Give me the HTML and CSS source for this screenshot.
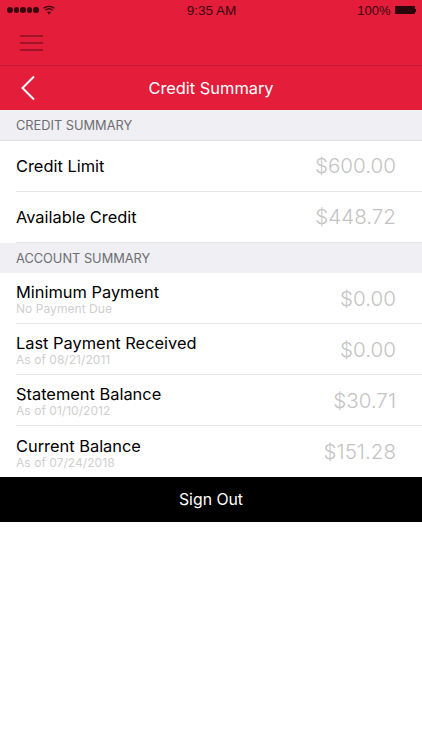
FILE: index.html
```html
<!DOCTYPE html>
<html lang="en">
<head>
    <meta charset="UTF-8">
    <meta name="viewport" content="width=device-width, initial-scale=1.0">
    <title>Credit Summary</title>
    <link rel="stylesheet" href="styles.css">
</head>
<body>
    <div class="header">
        <div class="status-bar">
            <div class="status-left">
                <span class="signal"><i></i><i></i><i></i><i></i><i></i></span>
                <svg class="wifi" width="12" height="10" viewBox="0 0 12 10">
                    <path d="M.6 3.3C3.6 .6 8.4 .6 11.4 3.3" fill="none" stroke="#3a0810" stroke-width="1.3"/>
                    <path d="M2.4 5.3C4.5 3.5 7.5 3.5 9.6 5.3" fill="none" stroke="#3a0810" stroke-width="1.3"/>
                    <path d="M4.1 7.1C5.2 6.2 6.8 6.2 7.9 7.1L6 9.4Z" fill="#3a0810"/>
                </svg>
            </div>
            <div class="status-time">9:35 AM</div>
            <div class="status-right">
                <span class="battery-text">100%</span>
                <span class="battery"></span>
                <span class="battery-tip"></span>
            </div>
        </div>
        <div class="menu-bar">
            <div class="hamburger"><i></i><i></i><i></i></div>
        </div>
        <div class="nav-bar">
            <svg class="back" width="16" height="26" viewBox="0 0 16 26">
                <path d="M14 1.5L2.5 13L14 24.5" fill="none" stroke="#fff" stroke-width="2"/>
            </svg>
            <h1>Credit Summary</h1>
        </div>
    </div>

    <div class="section-title">CREDIT SUMMARY</div>
    <div class="row">
        <div class="row-label">Credit Limit</div>
        <div class="row-value">$600.00</div>
    </div>
    <div class="row">
        <div class="row-label">Available Credit</div>
        <div class="row-value">$448.72</div>
    </div>

    <div class="section-title flush">ACCOUNT SUMMARY</div>
    <div class="row two-line">
        <div>
            <div class="row-label">Minimum Payment</div>
            <div class="row-note">No Payment Due</div>
        </div>
        <div class="row-value">$0.00</div>
    </div>
    <div class="row two-line">
        <div>
            <div class="row-label">Last Payment Received</div>
            <div class="row-note">As of 08/21/2011</div>
        </div>
        <div class="row-value">$0.00</div>
    </div>
    <div class="row two-line">
        <div>
            <div class="row-label">Statement Balance</div>
            <div class="row-note">As of 01/10/2012</div>
        </div>
        <div class="row-value">$30.71</div>
    </div>
    <div class="row two-line last">
        <div>
            <div class="row-label">Current Balance</div>
            <div class="row-note">As of 07/24/2018</div>
        </div>
        <div class="row-value">$151.28</div>
    </div>

    <div class="sign-out">Sign Out</div>
</body>
</html>
```

FILE: styles.css
```css
body {
    margin: 0;
    background-color: #fff;
    font-family: Inter, "Liberation Sans", sans-serif;
    color: #000;
}
.header {
    background-color: #e31d3a;
}
.status-bar {
    height: 20px;
    display: grid;
    grid-template-columns: 1fr auto 1fr;
    align-items: center;
    padding: 0 6px 0 7px;
    font-family: "Liberation Sans", sans-serif;
    font-size: 13.5px;
    color: #3a0810;
}
.status-left {
    display: flex;
    align-items: center;
    gap: 4px;
}
.signal {
    display: flex;
    gap: 1px;
}
.signal i {
    width: 5.5px;
    height: 5.5px;
    border-radius: 50%;
    background-color: #3a0810;
}
.status-right {
    display: flex;
    justify-content: flex-end;
    align-items: center;
}
.battery-text {
    font-size: 13px;
}
.battery {
    width: 20px;
    height: 8px;
    margin-left: 4px;
    background-color: #2a060c;
    border-radius: 1px;
}
.battery-tip {
    width: 1.5px;
    height: 3px;
    background-color: #2a060c;
}
.menu-bar {
    height: 45px;
    display: flex;
    align-items: center;
    padding-left: 20px;
    border-bottom: 1px solid #c41a34;
}
.hamburger {
    width: 23px;
    display: flex;
    flex-direction: column;
    gap: 5px;
}
.hamburger i {
    height: 2px;
    background-color: #a01428;
}
.nav-bar {
    height: 44px;
    position: relative;
    display: flex;
    align-items: center;
    justify-content: center;
}
.nav-bar h1 {
    margin: 0;
    font-size: 16.4px;
    font-weight: 400;
    color: #fff;
}
.back {
    position: absolute;
    left: 20px;
    top: 9px;
}
.section-title {
    height: 30px;
    line-height: 32px;
    padding-left: 16px;
    background-color: #efeff4;
    border-bottom: 1px solid #e0e0e4;
    font-size: 12.8px;
    color: #6d6d72;
}
.section-title.flush {
    border-bottom: none;
}
.row {
    height: 50px;
    display: flex;
    justify-content: space-between;
    align-items: center;
    margin-left: 16px;
    padding-right: 26px;
    border-bottom: 1px solid #e6e6e6;
}
.row.two-line {
    height: 49px;
    padding-top: 1px;
}
.row.last {
    height: 50px;
    border-bottom: none;
}
.row-label {
    font-size: 16.4px;
    line-height: 20px;
}
.row-note {
    font-size: 12.1px;
    line-height: 13px;
    color: #cfcfcf;
}
.row-value {
    padding-bottom: 1px;
    font-size: 20.6px;
    font-weight: 300;
    color: #c4c4c4;
}
.sign-out {
    height: 45px;
    line-height: 45px;
    text-align: center;
    background-color: #000;
    color: #fff;
    font-size: 15.8px;
}
```
